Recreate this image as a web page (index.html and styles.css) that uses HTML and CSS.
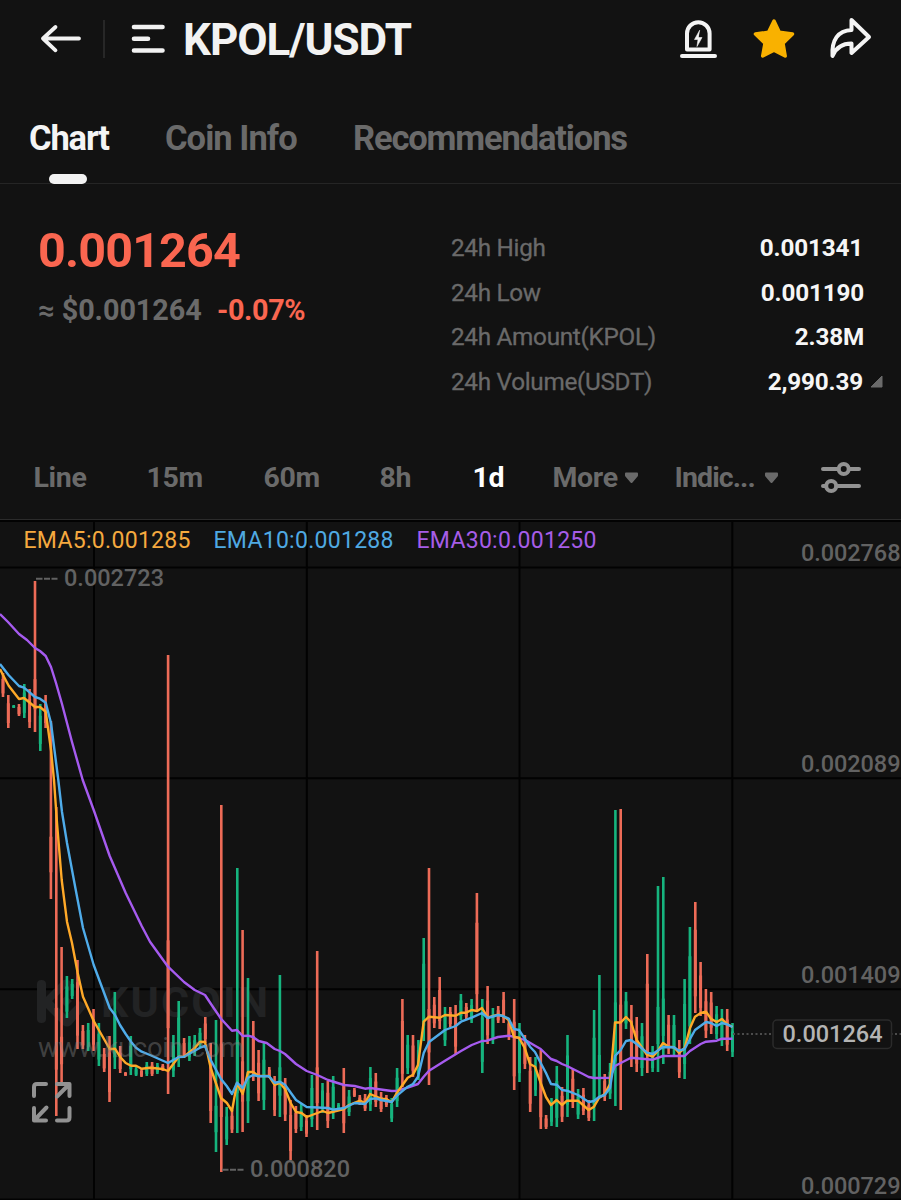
FILE: index.html
```
<!DOCTYPE html>
<html lang="en">
<head>
<meta charset="utf-8">
<title>KPOL/USDT</title>
<link rel="stylesheet" href="styles.css">
</head>
<body>
<header class="header">
  <svg class="back" width="42" height="32" viewBox="0 0 42 32"><path d="M39 15.500H3M15.500 4L3 15.500L15.500 27.300" /></svg>
  <span class="divider"></span>
  <svg class="menu" width="36" height="32" viewBox="0 0 36 32"><path d="M4 4H32.500M4 15.700H18M4 27.500H32.500" /></svg>
  <h1 class="pair">KPOL/USDT</h1>
  <svg class="alert" width="40" height="44" viewBox="0 0 40 44"><path d="M8 32.500V16.500A11.300 11.300 0 0 1 30.600 16.500V32.500ZM3 39H36"/><path class="bolt" d="M20.500 13.500L15.500 22.500H19L18 29.500L23 20.500H19.500Z"/></svg>
  <svg class="star" width="44" height="44" viewBox="0 0 44 44"><path d="M22 4L27.300 15.300L40.500 17L31 26.200L33.200 39L22 33.200L10.700 39L13 26.200L3.500 17L16.500 15.300Z"/></svg>
  <svg class="share" width="44" height="44" viewBox="0 0 44 44"><path d="M23.500 3L41 20L23.500 36V26.500C14 26.500 8 30.500 4.500 39C3.500 23 10 13.500 23.500 13Z"/></svg>
</header>
<nav class="tabs">
  <span class="tab tab-on">Chart</span><span class="tab tab-info">Coin Info</span><span class="tab tab-rec">Recommendations</span>
</nav>
<section class="summary">
  <div>
    <div class="price">0.001264</div>
    <div class="sub"><span class="usd">≈ $0.001264</span><span class="pct">-0.07%</span></div>
  </div>
  <div class="stats">
    <div class="stat"><span class="k">24h High</span><b class="v v1">0.001341</b></div>
    <div class="stat"><span class="k">24h Low</span><b class="v">0.001190</b></div>
    <div class="stat"><span class="k">24h Amount(KPOL)</span><b class="v">2.38M</b></div>
    <div class="stat"><span class="k">24h Volume(USDT)</span><b class="v v1">2,990.39</b>
      <svg class="corner" width="13" height="13" viewBox="0 0 13 13"><path d="M12 1V12H1Z"/></svg></div>
  </div>
</section>
<nav class="ranges">
  <span>Line</span><span>15m</span><span>60m</span><span>8h</span><span class="on">1d</span>
  <span class="drop">More<svg width="15" height="12" viewBox="0 0 15 12"><path d="M2 1.500H13V3.500L7.500 10L2 3.500Z"/></svg></span>
  <span class="drop ind">Indic...<svg width="15" height="12" viewBox="0 0 15 12"><path d="M2 1.500H13V3.500L7.500 10L2 3.500Z"/></svg></span>
  <svg class="sliders" width="42" height="34" viewBox="0 0 42 34"><path d="M3 8H18.500M29 8H39M3 25H6M16.500 25H39"/><circle cx="23.700" cy="8" r="5"/><circle cx="11.200" cy="25" r="5"/></svg>
</nav>
<main class="chart">
  <svg class="plot" width="901" height="680" viewBox="0 520 901 680">
    <path class="grid" d="M94 521V1200M306.800 521V1200M519.500 521V1200M732.300 521V1200M0 521H901M0 567.500H901M0 778.200H901M0 989.300H901M0 1199.500H901"/>
    <g class="mark">
      <path d="M37 984Q37 980 41.500 980Q46 980 46 984V997L62 981Q66 978 70 981L75 986L69 991L66 988L52 1001L66 1015L80 1001L87 1006L71 1025Q67 1028 63 1025L46 1008V1019Q46 1023 41.500 1023Q37 1023 37 1019ZM66 996L72 1001L66 1007L60 1001Z"/>
      <text class="brand" x="101" y="1017" textLength="167">KUCOIN</text>
    </g>
    <g id="candles"></g>
    <path class="ema30" d="M0 614L8 622L19 634L27 640L35 648L40 651L45.700 656L51 667L56 683L62 704L72 742L82.700 780L93.700 810L109.700 856L125.700 893L141.700 926L150 941.700L168 966.700L184 982L194.700 990L205 995L213 1007L221 1018.700L232 1030.700L237 1030L242.700 1036L248 1035.700L253 1037L258.700 1041L266.700 1043L274.700 1049L280 1051L285 1054L296 1064L306.700 1071L317.300 1075L328 1080L344 1085L354.700 1086L365 1088.700L370 1088L391.700 1091L397 1090.700L407.700 1087.700L418 1084L423.700 1076.700L429 1070.700L445 1060.700L461 1051L471.700 1045L482 1041L487 1040.700L498 1037L508.700 1035.700L519 1038L527 1041L535 1045.700L540.700 1049L551 1059L556.700 1061L562 1064L567 1066L583 1074L588.700 1077L594 1078L610 1077.700L615 1066L620.700 1063L631 1057.700L652.700 1059.700L663 1056L684.700 1056L690 1051L700.700 1044L706 1041.700L716.700 1040.700L722 1038.700H732.500"/>
    <path class="ema5" d="M0 669L3 675L8.700 685.700L19 699L24 698L35 707H40L45.700 711.700L51 750L54 780L57 823L61.700 880L67 921.700L72 943L77.700 973L83 996.700L88 1008L93.700 1021L109.700 1049L115 1048.700L120 1056.700L125.700 1063L131 1065.700H136L141.700 1068.700L150 1067.700L162.700 1069L168 1071L178.700 1056.700H184L194.700 1048L200 1041.700L205 1042L210.700 1068L221 1098L226.700 1102.700L232 1111L237 1083L242.700 1094L248 1072H253L258.700 1076H269L274.700 1085L280 1083L285 1089L290.700 1103L296 1112L301.500 1113L306.700 1117L322.700 1111L328 1113L344 1109L349 1105L360 1100.700L365 1103L370 1094L381 1098.700L386 1099L391.700 1102L397 1092.700L407.700 1077.700L413 1074.700L418 1065L423.700 1021.700L429 1016.700L439.700 1017.700L445 1015L455.700 1015.700L461 1012.700H466L471.700 1010L477 1011L482 1008L487.700 1017.700L493 1016L498 1014.700L503 1016L508.700 1020L514 1037L519 1037.700L524.700 1048L530 1064L535 1066.700L540.700 1083L546 1097L551 1105L556.700 1100L562 1105L567 1100.700H578L583 1105L588.700 1110L594 1106.700L599 1098L604.700 1094L610 1084L615 1022.500H620.700L626 1017L631 1022L636.700 1040L647 1054.700L652.700 1056.700L658 1050.700L663 1043L668.700 1046.700L674 1047.300L679 1052.700L684.700 1048L690 1028L695 1016.700L700.700 1013L706 1011.700L711 1018.700L716.700 1022L722 1019L727 1024L732.500 1027"/>
    <path class="ema10" d="M0 664L8.500 675L19 686L24 687.700L35 697L40 698.700L45.700 702.700L51 723L58.300 780L62 812L67 843L75 886L83 928L93.700 965L109.700 1008L115 1015L120 1025L125.700 1034L131 1041.700L136 1047.700L141.700 1051.700L150 1055L168 1063L178.700 1057L184 1056.700L200 1047.700L205 1046L210.700 1060L221 1079L226.700 1086L232 1094L237 1082.700L242.700 1088L248 1077.700L253 1075L258.700 1076.300H269L274.700 1082.700L280 1081.700L285 1084.700L296 1100L306.700 1107L328 1108L333 1109.700L344 1108L354.700 1103L365 1104L370 1099L376 1098.300L381 1100L391.700 1102L397 1095.700L407.700 1086.700L413 1084L418 1076.700L423.700 1053L429 1042L439.700 1034L445 1030L455.700 1026L461 1021.700L471.700 1017.700L482 1013L487.700 1018L498 1015L503 1016L508.700 1018.700L514 1029L519 1030L530 1046.700L535 1052L540.700 1063L546 1073L551 1084L556.700 1084.700L562 1090L567 1090.700L578 1095L588.700 1102L594 1101L599 1097L604.700 1095L610 1088L615 1056L620.700 1050L626 1041L631 1040L636.700 1044L647 1052.700L652.700 1054L663 1047L674 1047.300L679 1050.700L684.700 1049L690 1039L695 1030L706 1022L711 1023L716.700 1026L722 1023L727 1024.300L732.500 1027"/>
    <path class="now" d="M733 1034H901"/>
    <g class="legend">
      <text x="23.500" y="548" textLength="167" fill="#f5a93f">EMA5:0.001285</text>
      <text x="213.500" y="548" textLength="180" fill="#4fa9e2">EMA10:0.001288</text>
      <text x="416.500" y="548" textLength="180" fill="#a65de8">EMA30:0.001250</text>
    </g>
    <text class="url" x="38" y="1057" textLength="206">www.kucoin.com</text>
    <g class="axis">
      <text x="801" y="560.500" textLength="99.500">0.002768</text>
      <text x="801" y="771.500" textLength="99.500">0.002089</text>
      <text x="801" y="982.500" textLength="99.500">0.001409</text>
      <text x="801" y="1193.500" textLength="99.500">0.000729</text>
      <text x="64" y="586" textLength="100">0.002723</text>
      <text x="250" y="1177" textLength="100">0.000820</text>
      <path d="M36 578.800H42.500M44 578.800H50M51.500 578.800H57.500M222 1169.800H228.500M230 1169.800H236M237.500 1169.800H243.500"/>
    </g>
    <rect class="tag" x="773" y="1020" width="118.500" height="28.500" rx="4"/>
    <text class="tag-text" x="782.500" y="1041.500" textLength="100">0.001264</text>
    <path class="expand" d="M34 1096V1087Q34 1084 37 1084H46M34 1108V1120.500H46M34.500 1120L46.500 1107.500M57 1084H69.500V1096M69 1084.500L57 1096.500M69.500 1108V1117.500Q69.500 1120.500 66.500 1120.500H57"/>
  </svg>
</main>
<script src="chart.js"></script>
</body>
</html>
```
FILE: styles.css
```
* { box-sizing: border-box; }
body { margin: 0; width: 901px; height: 1200px; overflow: hidden; background: #121212; color: #f4f4f4; font-family: Roboto, sans-serif; }
svg { display: block; flex: none; fill: none; }
.header { display: flex; align-items: center; height: 78px; padding-left: 40px; }
.back, .menu { stroke: #f2f2f2; stroke-width: 4.600; stroke-linecap: round; stroke-linejoin: round; }
.back { stroke-width: 3.800; }
.divider { flex: none; width: 2px; height: 38px; margin-left: 21px; background: #272727; }
.menu { margin-left: 25px; }
.pair { flex: none; margin: 2px 0 0 17px; width: 496px; font-size: 44px; line-height: 50px; font-weight: 700; letter-spacing: -1.050px; color: #f2f2f2; }
.alert, .share { stroke: #f4f4f4; stroke-width: 4; stroke-linecap: round; stroke-linejoin: round; }
.alert .bolt { fill: #f4f4f4; stroke-width: 0.600; }
.star { margin-left: 33px; fill: #f9b100; stroke: #f9b100; stroke-width: 3.500; stroke-linejoin: round; }
.share { margin-left: 32px; }
.tabs { display: flex; height: 106px; padding: 38px 0 0 29px; border-bottom: 1px solid #252525; font-size: 34.500px; line-height: 44px; font-weight: 700; color: #6a6a6a; white-space: nowrap; }
.tab { letter-spacing: -1.150px; }
.tab-on { width: 136px; color: #f4f4f4; }
.tab-on::after { content: ""; display: block; width: 38px; height: 10px; margin: 14px 0 0 20px; border-radius: 5px; background: #f2f2f2; }
.tab-info { width: 188px; letter-spacing: -0.950px; }
.summary { display: grid; grid-template-columns: 413px 433px; height: 252px; padding: 36px 0 0 38px; }
.price { padding-top: 1px; font-size: 48.500px; line-height: 60px; font-weight: 700; letter-spacing: -0.850px; color: #fa6650; }
.sub { display: flex; margin-top: 11px; font-size: 28.800px; line-height: 36px; font-weight: 700; }
.usd { width: 179px; color: #6a6a6a; letter-spacing: -0.050px; }
.pct { color: #fa6650; letter-spacing: -0.400px; }
.stats { padding-top: 6px; }
.stat { display: flex; height: 44.500px; line-height: 44px; font-size: 24.300px; color: #6a6a6a; }
.k { width: 229px; letter-spacing: -0.300px; -webkit-text-stroke: 0.300px #6a6a6a; }
.v { width: 184px; text-align: right; color: #f6f6f6; font-weight: 700; letter-spacing: -0.180px; }
.v1 { padding-right: 1px; }
.corner { margin: 15px 0 0 6px; fill: #6a6a6a; stroke: #6a6a6a; stroke-linejoin: round; }
.ranges { display: grid; grid-template-columns: 113px 117px 116px 93px 80px 122px 145px 60px; align-items: center; height: 84px; padding-left: 33.500px; border-bottom: 1px solid #2b2b2b; font-size: 28.500px; font-weight: 700; letter-spacing: -0.350px; color: #6a6a6a; white-space: nowrap; }
.on { color: #fff; }
.drop { display: flex; align-items: center; }
.drop svg { margin-left: 6px; fill: #6a6a6a; stroke: #6a6a6a; stroke-width: 2; stroke-linejoin: round; }
.ind { letter-spacing: -0.900px; }
.ind svg { margin-left: 9px; }
.sliders { stroke: #929292; stroke-width: 4; stroke-linecap: round; }
.grid { stroke: #020202; stroke-width: 2; }
.ema5, .ema10, .ema30 { stroke-width: 2.400; stroke-linejoin: round; }
.ema5 { stroke: #ffa928; }
.ema10 { stroke: #4facea; }
.ema30 { stroke: #a65bef; }
.now { stroke: #4c4c4c; stroke-width: 2; stroke-dasharray: 2 2.500; }
.legend text { font-size: 23px; }
.axis text { font-size: 23.500px; fill: #626262; font-weight: 500; }
.axis path { stroke: #626262; stroke-width: 2; }
.mark { fill: #222324; fill-rule: evenodd; }
.brand { font-size: 43px; font-weight: 700; }
.url { font-size: 27.500px; fill: #8a8a8a; fill-opacity: 0.400; }
.tag { fill: #121212; stroke: #2b2b2b; stroke-width: 1.500; }
.tag-text { font-size: 23.500px; font-weight: 500; fill: #b4b4b4; }
.expand { stroke: #929292; stroke-width: 4; stroke-linecap: round; stroke-linejoin: round; }
.up { stroke: #16b47e; }
.down { stroke: #ed6b57; }
.wick { stroke-width: 2.600; }
.candle-body { stroke-width: 3; }
```
FILE: chart.js
```
// One candle per entry: direction (r = down, g = up), high and low in plot units.
const candles = `r673-697 r695-728 g705-708 r704-716 g684-718 r689-728 r581-732 g704-751 r695-728 r721-899
r807-1116 r947-1085 g976-1018 g979-999 r960-1049 r1025-1049 g1023-1051 r1009-1051 g1023-1066 r1048-1072
r1036-1102 g992-1069 r1046-1073 r1072-1076 g1036-1075 g1067-1076 r1069-1077 g1062-1076 r1062-1076 g1063-1074
r1064-1071 r655-1094 g1035-1077 g1001-1067 r1038-1058 g1036-1061 g1035-1056 g1028-1047 r1017-1043 r1043-1123
g1020-1152 r805-1172 g1107-1145 r1110-1133 g868-1133 r930-1132 g978-1123 r1021-1081 r1050-1101 g1043-1110
r1067-1078 r1076-1116 g975-1117 r1078-1121 r1100-1160 r1106-1133 g1104-1131 r1115-1137 g1075-1127 r951-1130
g1083-1113 r1081-1128 g1076-1119 g1103-1110 r1068-1133 g1090-1116 r1088-1097 r1095-1105 r1094-1111 g1067-1111
r1073-1107 r1092-1112 r1095-1107 g1098-1122 g1068-1107 r999-1087 g1035-1074 r1035-1077 g1040-1080 g938-1041
r868-1085 r997-1028 r977-1029 g1007-1046 r1007-1027 r1005-1054 g994-1020 r1003-1019 g999-1023 r893-1012
g999-1073 r986-1044 g1008-1044 r1006-1023 r992-1023 r1018-1040 r999-1090 g1023-1082 r1035-1069 r1057-1112
g1057-1096 r1050-1129 r1115-1129 g1098-1126 g1066-1127 r1087-1122 g1035-1117 r1069-1108 g1089-1119 r1088-1115
r1100-1121 g1010-1121 g975-1098 r1074-1101 g1063-1099 g810-1106 r809-1110 g992-1029 r1005-1067 r1017-1072
g1023-1076 r954-1073 g1046-1072 g886-1072 g877-1064 r1015-1054 g1015-1055 r1040-1078 g979-1079 g927-1044
r902-1013 r962-1016 r989-1038 r992-1034 g1006-1039 g1009-1046 r1009-1051 g1023-1057`.split(/\s+/);

const layer = document.getElementById("candles");
function segment(name, x, top, bottom) {
  const path = document.createElementNS("http://www.w3.org/2000/svg", "path");
  path.setAttribute("class", name);
  path.setAttribute("d", `M${x} ${top}V${bottom}`);
  layer.appendChild(path);
}
candles.forEach((entry, i) => {
  const x = (3 + i * 5.325).toFixed(1);
  const tone = entry[0] === "g" ? "up" : "down";
  const [high, low] = entry.slice(1).split("-").map(Number);
  const size = low - high;
  segment(`wick ${tone}`, x, high, low);
  segment(`candle-body ${tone}`, x, size > 120 ? low - size * 0.35 : high + size * 0.25, low - size * 0.15);
});
```
